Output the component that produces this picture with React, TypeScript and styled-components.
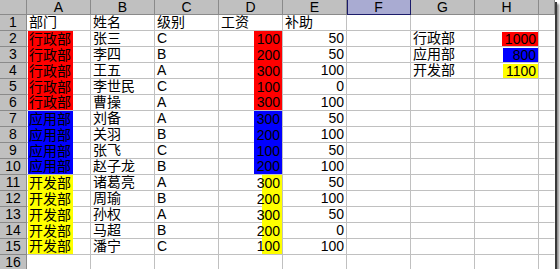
import React from "react";
import styled, { createGlobalStyle, css } from "styled-components";

const GlobalStyle = createGlobalStyle`
  body {
    margin: 0;
    background: #ffffff;
  }
`;

type Fill = "red" | "blue" | "yellow";

const fillColors: Record<Fill, string> = {
  red: "#ff0000",
  blue: "#0000ff",
  yellow: "#ffff00",
};

const deptFill: Record<string, Fill> = {
  行政部: "red",
  应用部: "blue",
  开发部: "yellow",
};

const rows: [string, string, string, number, number][] = [
  ["行政部", "张三", "C", 100, 50],
  ["行政部", "李四", "B", 200, 50],
  ["行政部", "王五", "A", 300, 100],
  ["行政部", "李世民", "C", 100, 0],
  ["行政部", "曹操", "A", 300, 100],
  ["应用部", "刘备", "A", 300, 50],
  ["应用部", "关羽", "B", 200, 100],
  ["应用部", "张飞", "C", 100, 50],
  ["应用部", "赵子龙", "B", 200, 100],
  ["开发部", "诸葛亮", "A", 300, 50],
  ["开发部", "周瑜", "B", 200, 100],
  ["开发部", "孙权", "A", 300, 50],
  ["开发部", "马超", "B", 200, 0],
  ["开发部", "潘宁", "C", 100, 100],
];

const summary: [string, number][] = [
  ["行政部", 1000],
  ["应用部", 800],
  ["开发部", 1100],
];

const columns = ["A", "B", "C", "D", "E", "F", "G", "H"];

const Frame = styled.div`
  width: 555px;
  height: 269px;
  overflow: hidden;
  box-shadow: 2px 2px 0 #3a3a3a, 4px 4px 2px rgba(0, 0, 0, 0.45);
  font-family: "Liberation Sans", "Noto Sans CJK SC", sans-serif;
  font-size: 14px;
  color: #000;
`;

const Sheet = styled.div`
  display: grid;
  grid-template-columns: 27px repeat(8, 64px) 16px;
  grid-template-rows: 15px repeat(16, 16px);
`;

const Corner = styled.div`
  background: #c0c0c0;
  border-right: 1px solid #8a8a8a;
  border-bottom: 1px solid #8a8a8a;
`;

const ColHead = styled.div<{ $active?: boolean }>`
  background: #c0c0c0;
  border-right: 1px solid #8a8a8a;
  border-bottom: 1px solid #8a8a8a;
  display: flex;
  align-items: center;
  justify-content: center;
  font-size: 14px;
  line-height: 14px;
  ${({ $active }) =>
    $active &&
    css`
      background: #a9abd2;
      border-right-color: #1c1c6a;
      border-bottom-color: #1c1c6a;
      box-shadow: inset 1px 0 0 #1c1c6a;
    `}
`;

const RowHead = styled.div`
  background: #c0c0c0;
  border-right: 1px solid #8a8a8a;
  border-bottom: 1px solid #8a8a8a;
  display: flex;
  align-items: center;
  justify-content: center;
  font-size: 14px;
  line-height: 15px;
`;

const Cell = styled.div<{ $right?: boolean; $edge?: boolean }>`
  background: #ffffff;
  border-right: 1px solid ${({ $edge }) => ($edge ? "#ffffff" : "#c0c0c0")};
  border-bottom: 1px solid #c0c0c0;
  display: flex;
  align-items: stretch;
  justify-content: ${({ $right }) => ($right ? "flex-end" : "flex-start")};
  padding: ${({ $right }) => ($right ? "0 2px 0 0" : "0 0 0 2px")};
  line-height: 15px;
  white-space: nowrap;
`;

const FillCell = styled.div<{ $right?: boolean }>`
  background: #ffffff;
  border-right: 1px solid #c0c0c0;
  border-bottom: 1px solid #c0c0c0;
  display: flex;
  align-items: stretch;
  justify-content: ${({ $right }) => ($right ? "flex-end" : "flex-start")};
  padding-left: ${({ $right }) => ($right ? "0" : "1px")};
  line-height: 15px;
  white-space: nowrap;
`;

const Swatch = styled.span<{
  $fill: Fill;
  $width: number;
  $right?: boolean;
  $join?: boolean;
  $gapTop?: boolean;
}>`
  display: flex;
  align-items: center;
  justify-content: ${({ $right }) => ($right ? "flex-end" : "flex-start")};
  width: ${({ $width }) => $width}px;
  background: ${({ $fill }) => fillColors[$fill]};
  padding: ${({ $right }) => ($right ? "0 2px 0 0" : "0 0 0 1px")};
  margin-bottom: ${({ $join }) => ($join ? "-1px" : "0")};
  margin-top: ${({ $gapTop }) => ($gapTop ? "1px" : "0")};
  box-sizing: border-box;
`;

const Text = styled.span`
  display: flex;
  align-items: center;
`;

type RowData = {
  dept?: string;
  name?: string;
  level?: string;
  pay?: number;
  extra?: number;
  g?: string;
  h?: number;
  header?: boolean;
  joinDown?: boolean;
};

const SheetRow = ({ index, data }: { index: number; data: RowData }) => {
  const fill = data.dept ? deptFill[data.dept] : undefined;
  const hFill = data.g ? deptFill[data.g] : undefined;
  return (
    <>
      <RowHead>{index}</RowHead>
      {fill && !data.header ? (
        <FillCell>
          <Swatch $fill={fill} $width={45} $join={data.joinDown}>
            {data.dept}
          </Swatch>
        </FillCell>
      ) : (
        <Cell>
          <Text>{data.dept}</Text>
        </Cell>
      )}
      <Cell>
        <Text>{data.name}</Text>
      </Cell>
      <Cell>
        <Text>{data.level}</Text>
      </Cell>
      {fill && data.pay !== undefined ? (
        <FillCell $right>
          <Swatch
            $fill={fill}
            $width={fill === "yellow" ? 20 : 28}
            $right
            $join={data.joinDown}
          >
            {data.pay}
          </Swatch>
        </FillCell>
      ) : (
        <Cell>
          <Text>{data.header ? "工资" : ""}</Text>
        </Cell>
      )}
      {data.header ? (
        <Cell>
          <Text>补助</Text>
        </Cell>
      ) : (
        <Cell $right>
          <Text>{data.extra}</Text>
        </Cell>
      )}
      <Cell />
      <Cell>
        <Text>{data.g}</Text>
      </Cell>
      {hFill ? (
        <FillCell $right>
          <Swatch $fill={hFill} $width={hFill === "red" ? 36 : 35} $right $gapTop>
            {data.h}
          </Swatch>
        </FillCell>
      ) : (
        <Cell />
      )}
      <Cell $edge />
    </>
  );
};

export default function App() {
  const data: RowData[] = [
    { dept: "部门", name: "姓名", level: "级别", header: true },
    ...rows.map(([dept, name, level, pay, extra], i) => {
      const next = rows[i + 1];
      const s = summary[i];
      return {
        dept,
        name,
        level,
        pay,
        extra,
        g: s?.[0],
        h: s?.[1],
        joinDown: next !== undefined && next[0] === dept,
      };
    }),
    {},
  ];

  return (
    <Frame>
      <GlobalStyle />
      <Sheet>
        <Corner />
        {columns.map((c) => (
          <ColHead key={c} $active={c === "F"}>
            {c}
          </ColHead>
        ))}
        <ColHead />
        {data.map((row, i) => (
          <SheetRow key={i} index={i + 1} data={row} />
        ))}
      </Sheet>
    </Frame>
  );
}
